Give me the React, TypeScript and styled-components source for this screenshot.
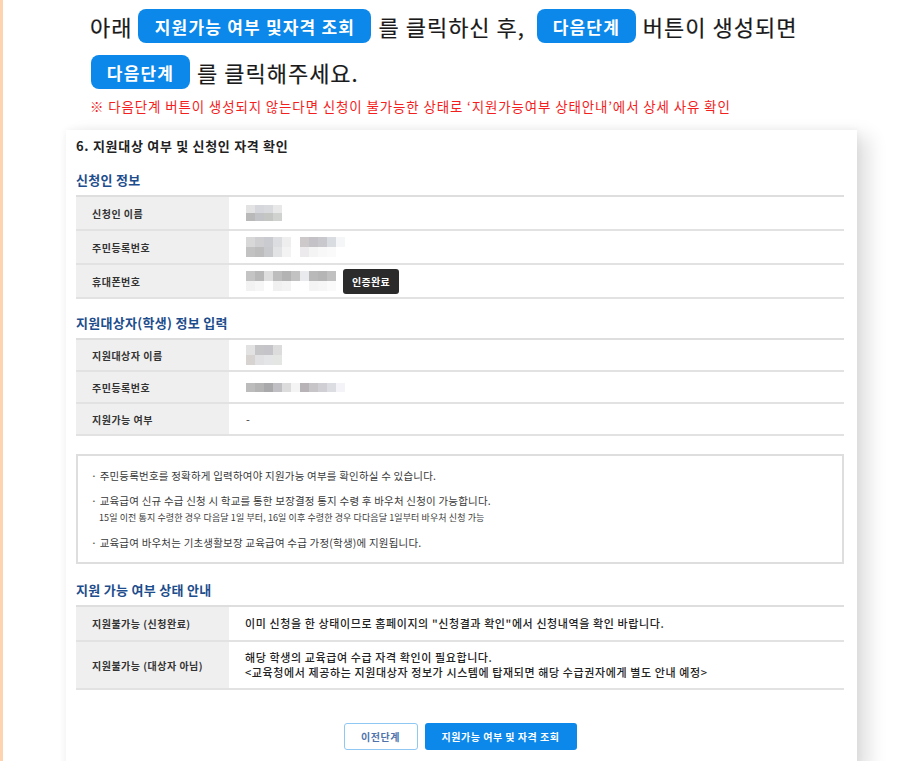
import * as React from 'react';
import styled, { createGlobalStyle } from 'styled-components';

const GlobalStyle = createGlobalStyle`
  html, body {
    margin: 0;
    padding: 0;
    background: #fff;
  }
  body {
    font-family: "Noto Sans CJK KR", "Noto Sans", sans-serif;
    color: #222;
  }
`;

type Mask = string[][];

const applicantName: Mask = [
    ['#e3e3e3', '#d5d7dc', '#d9dadd', '#e8e8e8'],
    ['#b9b9b9', '#c2c3c7', '#c4c6c4', '#d0d2d0'],
];
const applicantId: Mask = [
    ['#d8d8d8', '#cfcfd2', '#c9cbd0', '#dcdde0', '#eeeeee', '#fff', '#cdc9cb', '#c4c2c6', '#c9c9cd', '#d9dde2', '#f4f6f8'],
    ['#c2c2c2', '#bdbdbd', '#c8c9cc', '#e2e3e4', '#f3f3f3', '#fff', '#eceaec', '#f4f4f4', '#f8f8f8', '#fafafa', '#fff'],
];
const applicantPhone: Mask = [
    ['#c4c4c4', '#b8b8b8', '#dedede', '#bdbdbd', '#b3b3b3', '#c2c2c2', '#e8eaee', '#b9b9b9', '#b5b5b5', '#c0c0c0'],
    ['#f2f2f2', '#f6f6f6', '#fff', '#f0f0f0', '#f3f3f3', '#fff', '#fff', '#f4f4f4', '#f6f6f6', '#fafafa'],
];
const studentName: Mask = [
    ['#e2e2e2', '#c6c6c9', '#c5c5c9', '#dcdcdc'],
    ['#d6d3d0', '#e1e1e4', '#e3e5e6', '#e4e6e4'],
];
const studentId: Mask = [
    ['#bcbcbc', '#b4b4b4', '#a9a9ab', '#bfbfc4', '#dcdcdc', '#f4f4f4', '#b7b3b6', '#c8c5c8', '#d0d0d4', '#dcdde3', '#f4f4f8'],
];

function Mosaic(props: { cells: Mask; cellHeight?: number }) {
    const { cells, cellHeight = 8 } = props;
    return (
        <MosaicGrid $cols={cells[0].length} $h={cellHeight}>
            {cells.flatMap((row, r) => row.map((c, i) => <MosaicCell key={`${r}-${i}`} $c={c} />))}
        </MosaicGrid>
    );
}

export default function App() {
    return (
        <Page>
            <GlobalStyle />
            <Guide>
                <GuideLine>
                    아래<Pill $w={233}>지원가능 여부 및자격 조회</Pill>를 클릭하신 후, <Pill $w={99}>다음단계</Pill>버튼이 생성되면
                </GuideLine>
                <GuideLine>
                    <Pill $w={99} $first>다음단계</Pill>를 클릭해주세요.
                </GuideLine>
                <Warning>※ 다음단계 버튼이 생성되지 않는다면 신청이 불가능한 상태로 ‘지원가능여부 상태안내’에서 상세 사유 확인</Warning>
            </Guide>

            <Card>
                <CardTitle>6. 지원대상 여부 및 신청인 자격 확인</CardTitle>

                <SectionTitle>신청인 정보</SectionTitle>
                <Table>
                    <Row $h={32}>
                        <Label>신청인 이름</Label>
                        <Value><Mosaic cells={applicantName} /></Value>
                    </Row>
                    <Row $h={32}>
                        <Label>주민등록번호</Label>
                        <Value><Mosaic cells={applicantId} cellHeight={10} /></Value>
                    </Row>
                    <Row $h={32}>
                        <Label>휴대폰번호</Label>
                        <Value>
                            <Mosaic cells={applicantPhone} cellHeight={10} />
                            <Badge>인증완료</Badge>
                        </Value>
                    </Row>
                </Table>

                <SectionTitle $top={15}>지원대상자(학생) 정보 입력</SectionTitle>
                <Table>
                    <Row $h={30}>
                        <Label>지원대상자 이름</Label>
                        <Value><Mosaic cells={studentName} cellHeight={10} /></Value>
                    </Row>
                    <Row $h={30}>
                        <Label>주민등록번호</Label>
                        <Value><Mosaic cells={studentId} cellHeight={9} /></Value>
                    </Row>
                    <Row $h={30}>
                        <Label>지원가능 여부</Label>
                        <Value>-</Value>
                    </Row>
                </Table>

                <NoteBox>
                    <Note>· 주민등록번호를 정확하게 입력하여야 지원가능 여부를 확인하실 수 있습니다.</Note>
                    <Note $gap={9}>· 교육급여 신규 수급 신청 시 학교를 통한 보장결정 통지 수령 후 바우처 신청이 가능합니다.</Note>
                    <SubNote>15일 이전 통지 수령한 경우 다음달 1일 부터, 16일 이후 수령한 경우 다다음달 1일부터 바우처 신청 가능</SubNote>
                    <Note $gap={10}>· 교육급여 바우처는 기초생활보장 교육급여 수급 가정(학생)에 지원됩니다.</Note>
                </NoteBox>

                <SectionTitle $top={17}>지원 가능 여부 상태 안내</SectionTitle>
                <Table>
                    <Row $h={33}>
                        <Label>지원불가능 (신청완료)</Label>
                        <StatusText>이미 신청을 한 상태이므로 홈페이지의 "신청결과 확인"에서 신청내역을 확인 바랍니다.</StatusText>
                    </Row>
                    <Row $h={46}>
                        <Label>지원불가능 (대상자 아님)</Label>
                        <StatusText>
                            해당 학생의 교육급여 수급 자격 확인이 필요합니다.
                            <br />
                            &lt;교육청에서 제공하는 지원대상자 정보가 시스템에 탑재되면 해당 수급권자에게 별도 안내 예정&gt;
                        </StatusText>
                    </Row>
                </Table>

                <ButtonBar>
                    <Button $variant="outline">이전단계</Button>
                    <Button $variant="primary">지원가능 여부 및 자격 조회</Button>
                </ButtonBar>
            </Card>
        </Page>
    );
}

const Page = styled.div`
    width: 917px;
    height: 761px;
    overflow: hidden;
    box-sizing: border-box;
    border-left: 3px solid #fdd3b0;
    background: #fff;
`;

const Guide = styled.div`
    padding: 9px 0 0 87px;
`;

const GuideLine = styled.div`
    display: flex;
    align-items: center;
    height: 34px;
    margin-bottom: 12px;
    font-size: 22px;
    font-weight: 400;
    color: #1a1a1a;
    letter-spacing: 1px;
    white-space: pre;
    -webkit-text-stroke: 0.2px #1a1a1a;
`;

const Pill = styled.span<{ $w: number; $first?: boolean }>`
    display: inline-flex;
    align-items: center;
    justify-content: center;
    width: ${(p) => p.$w}px;
    height: 34px;
    margin: 0 7px 0 ${(p) => (p.$first ? 1 : 6)}px;
    border-radius: 8px;
    background: #0b88e9;
    color: #fff;
    font-size: 17px;
    font-weight: 700;
    letter-spacing: 1.2px;
    -webkit-text-stroke: 0;
`;

const Warning = styled.div`
    margin-top: -4px;
    font-size: 13.5px;
    line-height: 18px;
    color: #f31e1e;
    letter-spacing: 0.85px;
`;

const Card = styled.section`
    width: 791px;
    height: 640px;
    margin: 15px 0 0 63px;
    padding: 7px 13px 0 10px;
    box-sizing: border-box;
    background: #fff;
    box-shadow: 0 0 8px rgba(0, 0, 0, 0.06), 12px 6px 18px rgba(0, 0, 0, 0.12);
`;

const CardTitle = styled.h1`
    margin: 0;
    font-size: 13px;
    line-height: 18px;
    font-weight: 700;
    letter-spacing: 0.7px;
    color: #222;
`;

const SectionTitle = styled.h2<{ $top?: number }>`
    margin: ${(p) => p.$top ?? 16}px 0 6px;
    font-size: 13px;
    line-height: 18px;
    font-weight: 700;
    letter-spacing: 0.3px;
    color: #1d4d8c;
`;

const Table = styled.div`
    border-top: 2px solid #dedede;
`;

const Row = styled.div<{ $h: number }>`
    display: grid;
    grid-template-columns: 153px 1fr;
    height: ${(p) => p.$h}px;
    border-bottom: 2px solid #e2e2e2;
`;

const Label = styled.div`
    display: flex;
    align-items: center;
    padding-left: 16px;
    background: #efefef;
    font-size: 10px;
    font-weight: 700;
    letter-spacing: 0.5px;
    color: #333;
`;

const Value = styled.div`
    display: flex;
    align-items: center;
    padding-left: 17px;
    font-size: 11px;
    color: #333;
`;

const StatusText = styled.div`
    display: flex;
    flex-direction: column;
    justify-content: center;
    padding-left: 16px;
    font-size: 11px;
    line-height: 15px;
    font-weight: 500;
    letter-spacing: 0.6px;
    color: #222;
`;

const MosaicGrid = styled.div<{ $cols: number; $h: number }>`
    display: grid;
    grid-template-columns: repeat(${(p) => p.$cols}, 9px);
    grid-auto-rows: ${(p) => p.$h}px;
    filter: blur(0.7px);
`;

const MosaicCell = styled.span<{ $c: string }>`
    background: ${(p) => p.$c};
`;

const Badge = styled.span`
    display: inline-flex;
    align-items: center;
    justify-content: center;
    width: 56px;
    height: 25px;
    margin-left: 7px;
    border-radius: 3px;
    background: #2b2b2b;
    color: #fff;
    font-size: 10px;
    font-weight: 700;
    letter-spacing: 0.3px;
`;

const NoteBox = styled.div`
    margin-top: 18px;
    height: 110px;
    box-sizing: border-box;
    padding: 12px 0 0 13px;
    border: 2px solid #dedede;
`;

const Note = styled.div<{ $gap?: number }>`
    margin-top: ${(p) => p.$gap ?? 0}px;
    font-size: 10.5px;
    line-height: 16px;
    letter-spacing: 0.2px;
    color: #3a3a3a;
`;

const SubNote = styled.div`
    margin-top: 2px;
    padding-left: 8px;
    font-size: 9px;
    line-height: 14px;
    letter-spacing: 0.1px;
    color: #3a3a3a;
`;

const ButtonBar = styled.div`
    display: flex;
    justify-content: center;
    gap: 7px;
    margin-top: 33px;
`;

const Button = styled.button<{ $variant: 'outline' | 'primary' }>`
    height: 27px;
    width: ${(p) => (p.$variant === 'outline' ? 74 : 152)}px;
    border-radius: 3px;
    font-family: inherit;
    font-size: 10px;
    font-weight: 700;
    letter-spacing: 0.5px;
    cursor: pointer;
    border: ${(p) => (p.$variant === 'outline' ? '1.5px solid #8ec8f3' : 'none')};
    background: ${(p) => (p.$variant === 'outline' ? '#fff' : '#0b88e9')};
    color: ${(p) => (p.$variant === 'outline' ? '#4f74ad' : '#fff')};
`;
